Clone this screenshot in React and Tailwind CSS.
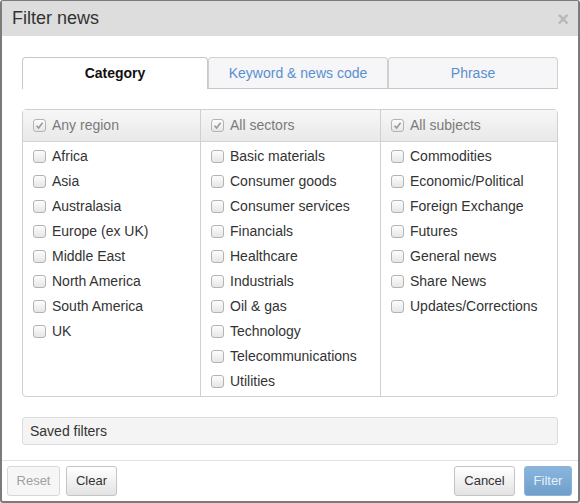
const regions = ["Africa", "Asia", "Australasia", "Europe (ex UK)", "Middle East", "North America", "South America", "UK"];
const sectors = ["Basic materials", "Consumer goods", "Consumer services", "Financials", "Healthcare", "Industrials", "Oil & gas", "Technology", "Telecommunications", "Utilities"];
const subjects = ["Commodities", "Economic/Political", "Foreign Exchange", "Futures", "General news", "Share News", "Updates/Corrections"];

function Box({ checked }) {
  return (
    <span className="w-[13px] h-[13px] shrink-0 border border-[#b3b3b3] rounded-[3px] bg-gradient-to-b from-[#fdfdfd] to-[#e6e6e6] flex items-center justify-center">
      {checked && (
        <svg width="9" height="9" viewBox="0 0 9 9">
          <path d="M1.5 4.8 L3.6 7 L7.6 1.8" stroke="#9a9a9a" strokeWidth="1.6" fill="none" />
        </svg>
      )}
    </span>
  );
}

function Column({ title, items, className }) {
  return (
    <div className={"border border-[#d0d0d0] flex flex-col " + className}>
      <div className="h-[32px] shrink-0 flex items-center gap-[6px] pl-[10px] bg-gradient-to-b from-[#f7f7f7] to-[#e9e9e9] border-b border-[#d5d5d5] text-[#7a7a7a]">
        <Box checked />
        <span>{title}</span>
      </div>
      <div className="pt-[2px]">
        {items.map((item) => (
          <div key={item} className="h-[25px] flex items-center gap-[6px] pl-[10px] text-[#333]">
            <Box />
            <span>{item}</span>
          </div>
        ))}
      </div>
    </div>
  );
}

export default function App() {
  return (
    <div
      className="w-[580px] h-[503px] border-2 border-t border-[#7b7b7b] rounded-[3px] bg-white flex flex-col text-[14px] overflow-hidden"
      style={{ fontFamily: '"Liberation Sans", Arial, sans-serif' }}
    >
      <div className="h-[35px] shrink-0 bg-[#dddddd] flex items-center justify-between pl-[10px] pr-[9px]">
        <span className="text-[18px] text-[#333]">Filter news</span>
        <span className="text-[20px] font-bold text-[#b8b8b8] leading-none">×</span>
      </div>

      <div className="px-[20px] pt-[21px] flex-1">
        <div className="flex h-[32px] border-b border-[#c8c8c8]">
          <div className="w-[186px] -mb-px bg-white border border-b-0 border-[#c8c8c8] rounded-t-[4px] flex items-center justify-center font-bold text-[#111]">
            Category
          </div>
          <div className="w-[180px] bg-[#f6f6f8] border border-b-0 border-[#d0d0d0] rounded-t-[4px] flex items-center justify-center text-[#5a8fcf]">
            Keyword &amp; news code
          </div>
          <div className="w-[170px] bg-[#f6f6f8] border border-b-0 border-[#d0d0d0] rounded-t-[4px] flex items-center justify-center text-[#5a8fcf]">
            Phrase
          </div>
        </div>

        <div className="flex mt-[20px] h-[288px]">
          <Column title="Any region" items={regions} className="w-[179px] rounded-l-[4px]" />
          <Column title="All sectors" items={sectors} className="w-[181px] -ml-px" />
          <Column title="All subjects" items={subjects} className="w-[178px] -ml-px rounded-r-[4px]" />
        </div>

        <div className="mt-[20px] h-[28px] border border-[#dcdcdc] rounded-[3px] bg-[#f4f4f4] flex items-center px-[7px] text-[#333]">
          Saved filters
        </div>
      </div>

      <div className="h-[41px] shrink-0 border-t border-[#e3e3e3] flex items-center justify-between pl-[5px] pr-[6px]">
        <div className="flex gap-[6px]">
          <button className="h-[30px] w-[53px] border border-[#d8d8d8] rounded-[3px] bg-[#f6f6f6] text-[#a0a0a0] text-[13px]">Reset</button>
          <button className="h-[30px] w-[51px] border border-[#c4c4c4] rounded-[3px] bg-gradient-to-b from-[#ffffff] to-[#e3e3e3] text-[#333] text-[13px]">Clear</button>
        </div>
        <div className="flex gap-[9px]">
          <button className="h-[30px] w-[61px] border border-[#c4c4c4] rounded-[3px] bg-gradient-to-b from-[#ffffff] to-[#e3e3e3] text-[#333] text-[13px]">Cancel</button>
          <button className="h-[30px] w-[48px] border border-[#8fb3d6] rounded-[3px] bg-gradient-to-b from-[#8ab6de] to-[#6f9fcb] text-[#e6f0fa] text-[13px]">Filter</button>
        </div>
      </div>
    </div>
  );
}
